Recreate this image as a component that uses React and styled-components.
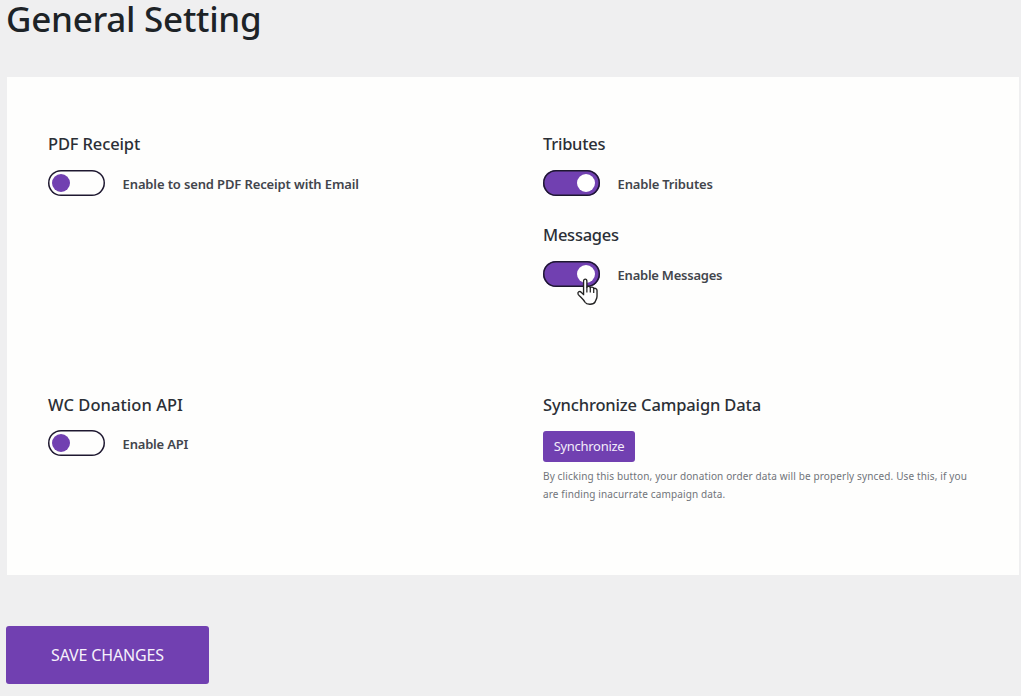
import React, { useState } from 'react';
import styled, { createGlobalStyle } from 'styled-components';

const GlobalStyle = createGlobalStyle`
  * {
    box-sizing: border-box;
  }

  body {
    margin: 0;
    background: #efeff0;
    color: #1d2327;
    font-family: 'Segoe UI', 'Noto Sans', 'Open Sans', sans-serif;
  }
`

const Page = styled.main`
  height: 696px;
  padding: 0 2px 0 7px;
`

const Title = styled.h1`
  margin: 0 0 0 -1px;
  height: 77px;
  font-size: 35px;
  font-weight: 500;
  line-height: 38px;
  letter-spacing: -0.27px;
  white-space: nowrap;
`

const Panel = styled.section`
  display: grid;
  grid-template-columns: 495px 1fr;
  grid-template-rows: 261px 1fr;
  height: 498px;
  padding: 55px 30px 0 41px;
  background: #fefefd;
`

const Group = styled.div`
  display: flex;
  flex-direction: column;
  align-items: flex-start;
`

const Setting = styled.div`
  height: 91.4px;
`

const Heading = styled.h2`
  margin: 0 0 ${props => props.$gap || '14px'};
  font-size: 16.5px;
  font-weight: 500;
  line-height: 24px;
  letter-spacing: ${props => props.$spacing || '-0.14px'};
  color: #2b2f36;
  white-space: nowrap;
`

const SwitchRow = styled.div`
  display: flex;
  align-items: center;
  gap: 18px;
  height: 26px;
`

const Track = styled.button`
  position: relative;
  display: flex;
  align-items: center;
  justify-content: ${props => (props.$on ? 'flex-end' : 'flex-start')};
  width: 56.6px;
  height: 26px;
  padding: 0 4.4px 0 4px;
  border: none;
  border-radius: 13px;
  background: ${props => (props.$on ? '#7140b1' : '#fefefd')};
  box-shadow: inset 0 0 0 1.5px #1e1830;
  cursor: pointer;
`

const Knob = styled.span`
  width: 18px;
  height: 18px;
  border-radius: 50%;
  background: ${props => (props.$on ? '#fff' : '#7140b1')};
`

const SwitchLabel = styled.span`
  font-size: 13px;
  font-weight: 600;
  line-height: 20px;
  padding-top: 1px;
  letter-spacing: ${props => props.$spacing || '-0.13px'};
  color: #42454c;
  white-space: nowrap;
`

const Pointer = styled.svg`
  position: absolute;
  left: 33px;
  top: 16px;
  width: 23px;
  height: 29px;
`

const SyncButton = styled.button`
  width: 92px;
  height: 31px;
  margin-bottom: 5px;
  padding: 0 0 2px;
  border: none;
  border-radius: 3px;
  background: #7140b1;
  color: #f3edfa;
  font-family: inherit;
  font-size: 13px;
  letter-spacing: -0.3px;
  cursor: pointer;
`

const Note = styled.p`
  margin: 0;
  font-size: 10px;
  line-height: 18px;
  letter-spacing: 0.14px;
  color: #70747a;
  white-space: nowrap;
`

const SaveButton = styled.button`
  width: 203px;
  height: 58px;
  margin: 51px 0 0 -1px;
  padding: 0;
  border: none;
  border-radius: 3px;
  background: #7140b1;
  color: #f6f1fb;
  font-family: inherit;
  font-size: 16px;
  letter-spacing: -0.15px;
  cursor: pointer;
`

const HandPointer = () => (
  <Pointer viewBox="0 0 22 28">
    <path
      d="M7.2 17.5V4C7.2 1.4 10.4 1.4 10.4 4V9.8C11 8.6 13.5 8.8 13.7 10.3C14.5 9.4 16.8 9.6 17 11.2C18.2 10.5 20.2 11.2 20.2 13V18.5C20.2 21 19 22 18.4 24C16.8 27 10.2 27 8.6 24.4C7.2 21.5 3.6 19 2 16.7C0.9 14.4 3.4 13.2 4.9 14.7L7.2 17"
      fill="#fff"
      stroke="#222"
      strokeWidth="1.3"
      strokeLinejoin="round"
    />
    <path d="M10.4 9.5V15M13.7 10.3V15M17 11.2V15.5" fill="none" stroke="#222" strokeWidth="1.2" />
  </Pointer>
)

const Toggle = ({ title, label, initial, gap, spacing, labelSpacing, hovered }) => {
  const [on, setOn] = useState(initial);

  return (
    <Setting>
      <Heading $gap={gap} $spacing={spacing}>{title}</Heading>
      <SwitchRow>
        <Track type="button" role="switch" aria-checked={on} aria-label={label} $on={on} onClick={() => setOn(!on)}>
          <Knob $on={on} />
          {hovered && <HandPointer />}
        </Track>
        <SwitchLabel $spacing={labelSpacing}>{label}</SwitchLabel>
      </SwitchRow>
    </Setting>
  );
};

const App = () => (
  <>
    <GlobalStyle />
    <Page>
      <Title>General Setting</Title>
      <Panel>
        <Group>
          <Toggle title="PDF Receipt" label="Enable to send PDF Receipt with Email" initial={false} />
        </Group>
        <Group>
          <Toggle title="Tributes" label="Enable Tributes" initial={true} spacing="-0.25px" labelSpacing="-0.18px" />
          <Toggle title="Messages" label="Enable Messages" initial={true} spacing="-0.25px" labelSpacing="-0.24px" hovered />
        </Group>
        <Group>
          <Toggle title="WC Donation API" label="Enable API" initial={false} gap="13px" spacing="0.05px" labelSpacing="-0.2px" />
        </Group>
        <Group>
          <Heading>Synchronize Campaign Data</Heading>
          <SyncButton type="button">Synchronize</SyncButton>
          <Note>
            By clicking this button, your donation order data will be properly synced. Use this, if you
            <br />
            are finding inacurrate campaign data.
          </Note>
        </Group>
      </Panel>
      <SaveButton type="button">SAVE CHANGES</SaveButton>
    </Page>
  </>
)

export default App
